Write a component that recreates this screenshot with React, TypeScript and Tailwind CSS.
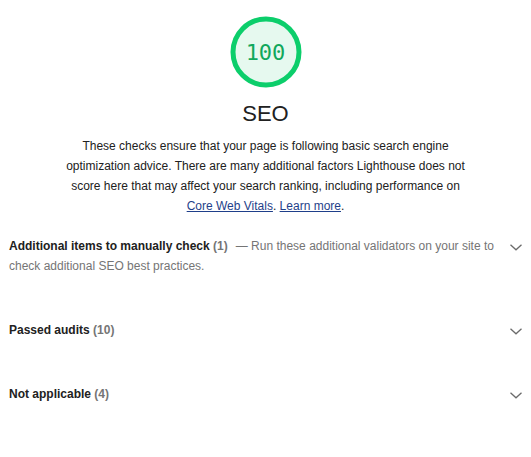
const GROUPS = [
  {
    title: 'Additional items to manually check',
    count: 1,
    description: 'Run these additional validators on your site to check additional SEO best practices.',
  },
  { title: 'Passed audits', count: 10 },
  { title: 'Not applicable', count: 4 },
];

function Gauge({ score }: { score: number }) {
  return (
    <div className="relative w-[72px] h-[72px]">
      <svg viewBox="0 0 72 72" className="w-[72px] h-[72px]">
        <circle cx="36" cy="36" r="33" fill="#e6f9ef" stroke="#0cce6b" strokeWidth="5" />
      </svg>
      <div className="absolute inset-0 flex items-center justify-center text-[22px] text-[#10a85c] font-['DejaVu_Sans_Mono',monospace]">
        {score}
      </div>
    </div>
  );
}

function Chevron() {
  return (
    <svg width="12" height="7" viewBox="0 0 12 7" className="shrink-0 mt-[8px] ml-[10px]">
      <polyline points="0.5,0.8 6,5.8 11.5,0.8" fill="none" stroke="#6b6b6b" strokeWidth="1.3" />
    </svg>
  );
}

export default function App() {
  return (
    <div className="min-h-screen bg-white text-[#212121] font-['Liberation_Sans',Arial,sans-serif]">
      {/* Score header */}
      <div className="flex flex-col items-center pt-[16px]">
        <Gauge score={100} />
        <div className="mt-[14px] text-[22px] leading-[24px]">SEO</div>
        <p className="mt-[10px] w-[440px] text-center text-[12px] leading-[20px]">
          These checks ensure that your page is following basic search engine
          <br />
          optimization advice. There are many additional factors Lighthouse does not
          <br />
          score here that may affect your search ranking, including performance on
          <br />
          <a href="#" className="text-[#1f3f8a] underline">Core Web Vitals</a>.{' '}
          <a href="#" className="text-[#1f3f8a] underline">Learn more</a>.
        </p>
      </div>

      {/* Audit groups */}
      <div className="mt-[12px] flex flex-col">
        {GROUPS.map((g) => (
          <div key={g.title} className="flex items-start pl-[9px] pr-[9px] pt-[8px] pb-[36px]">
            <div className="flex-1 text-[12px] leading-[20px]">
              <span className="font-bold">{g.title}</span>{' '}
              <span className="font-bold text-[#757575]">({g.count})</span>
              {g.description && (
                <span className="ml-[8px] text-[#757575]">— {g.description}</span>
              )}
            </div>
            <Chevron />
          </div>
        ))}
      </div>
    </div>
  );
}
